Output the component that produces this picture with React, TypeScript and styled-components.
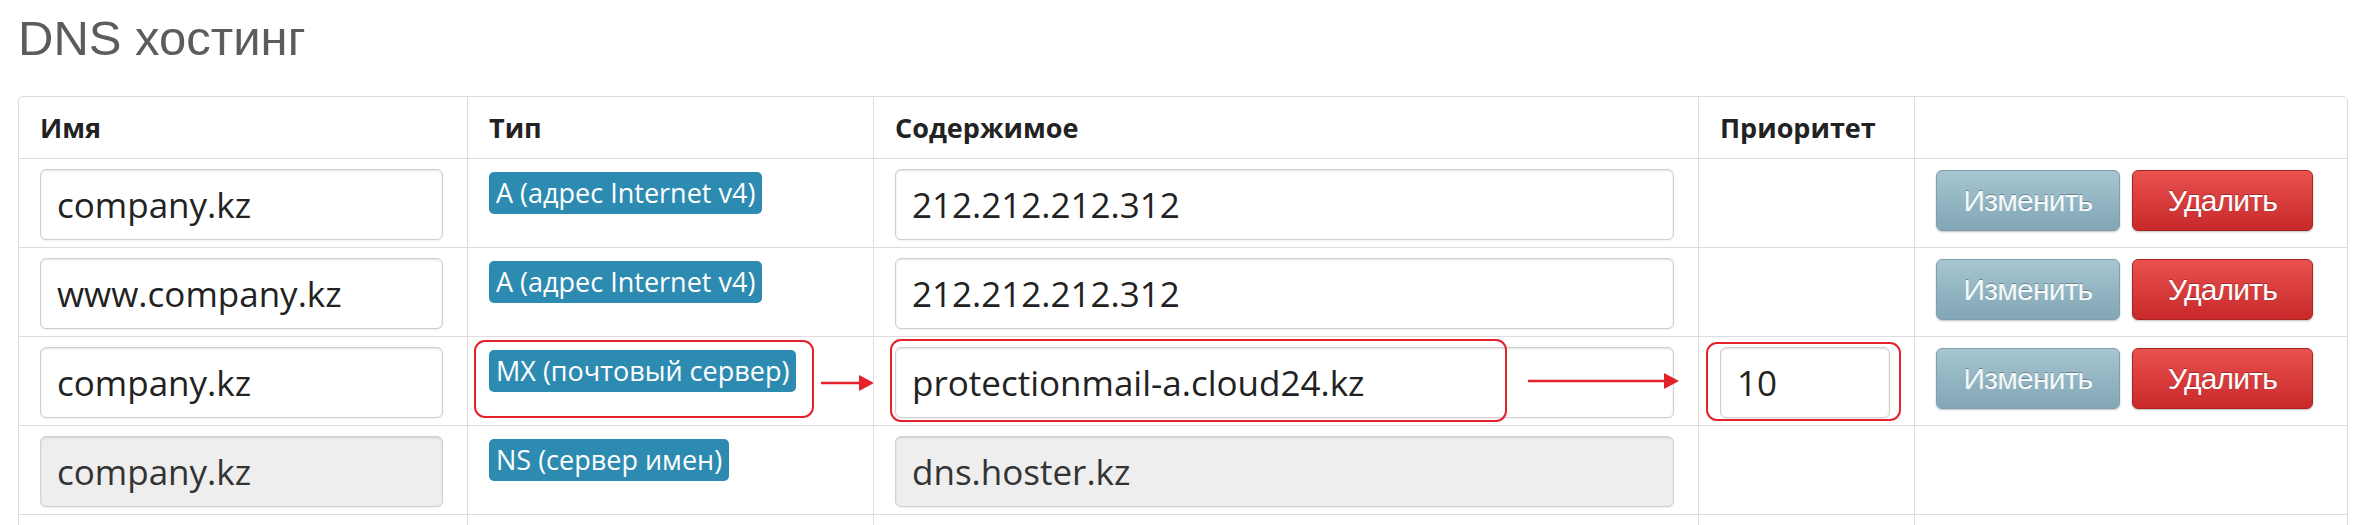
import React from 'react';
import styled, { createGlobalStyle } from 'styled-components';

const GlobalStyle = createGlobalStyle`
  html, body {
    margin: 0;
    padding: 0;
    background: #fff;
    overflow: hidden;
  }
  body {
    font-family: "Open Sans", "Liberation Sans", sans-serif;
    color: #333;
  }
`;

const Page = styled.div`
  padding: 14px 0 0 18px;
`;

const Title = styled.h1`
  margin: 0 0 34px;
  font-family: "Liberation Sans", Arial, sans-serif;
  font-weight: normal;
  font-size: 49px;
  line-height: 48px;
  color: #5c5c5c;
`;

const Table = styled.table`
  width: 2330px;
  table-layout: fixed;
  border-collapse: separate;
  border-spacing: 0;
  border: 1px solid #ddd;
  border-radius: 5px;
`;

const Col = styled.col<{ $w: number }>`
  width: ${p => p.$w}px;
`;

const Th = styled.th`
  height: 61px;
  padding: 0 21px;
  text-align: left;
  vertical-align: middle;
  font-size: 27px;
  font-weight: 700;
  color: #222;
  & + & {
    border-left: 1px solid #ddd;
  }
`;

const Td = styled.td`
  position: relative;
  padding: 10px 24px 7px 21px;
  vertical-align: top;
  border-top: 1px solid #ddd;
  & + & {
    border-left: 1px solid #ddd;
  }
`;

const Input = styled.input`
  box-sizing: border-box;
  display: block;
  width: 100%;
  height: 71px;
  padding: 0 16px;
  font-family: "Open Sans", sans-serif;
  font-size: 35px;
  color: #222;
  background: #fff;
  border: 1px solid #cfcfcf;
  border-radius: 6px;
  box-shadow: inset 0 1px 2px rgba(0, 0, 0, 0.12), 0 1px 1px rgba(0, 0, 0, 0.06);
  outline: none;

  &:disabled {
    background: #eee;
    color: #333;
    border-color: #d2d2d2;
  }
`;

const Label = styled.span`
  display: inline-block;
  margin-top: 3px;
  height: 42px;
  line-height: 42px;
  padding: 0 7px;
  font-size: 27px;
  color: #fff;
  background: #2d8bb1;
  border-radius: 5px;
  white-space: nowrap;
`;

const Actions = styled.div`
  display: flex;
  gap: 12px;
  margin-top: 1px;
`;

const Button = styled.button<{ $kind: 'edit' | 'delete' }>`
  height: 61px;
  padding: 0;
  font-family: "Liberation Sans", Arial, sans-serif;
  font-size: 30px;
  letter-spacing: -0.8px;
  color: #fff;
  text-shadow: 0 -1px 0 rgba(0, 0, 0, 0.3);
  border-radius: 6px;
  cursor: pointer;
  box-shadow: 0 1px 2px rgba(0, 0, 0, 0.25);
  ${p =>
    p.$kind === 'edit'
      ? `
    width: 184px;
    background: linear-gradient(#a6c5d1, #82a6b5);
    border: 1px solid #7f9fad;
    color: #f4fafc;
  `
      : `
    width: 181px;
    background: linear-gradient(#e9514f, #c8292a);
    border: 1px solid #a92222;
  `}
`;

const Mark = styled.div<{ $l: number; $t: number; $w: number; $h: number }>`
  position: absolute;
  left: ${p => p.$l}px;
  top: ${p => p.$t}px;
  width: ${p => p.$w}px;
  height: ${p => p.$h}px;
  box-sizing: border-box;
  border: 2px solid #e3222c;
  border-radius: 11px;
  pointer-events: none;
`;

const ArrowBox = styled.svg<{ $l: number; $t: number }>`
  position: absolute;
  left: ${p => p.$l}px;
  top: ${p => p.$t}px;
`;

const Arrow: React.FC<{ left: number; top: number; length: number }> = ({ left, top, length }) => (
  <ArrowBox $l={left} $t={top} width={length} height={18} viewBox={`0 0 ${length} 18`}>
    <line x1="0" y1="9" x2={length - 12} y2="9" stroke="#e3222c" strokeWidth="2.5" />
    <polygon points={`${length - 15},1 ${length},9 ${length - 15},17`} fill="#e3222c" />
  </ArrowBox>
);

type Rec = {
  name: string;
  type: string;
  content: string;
  priority?: string;
  locked?: boolean;
  marked?: boolean;
};

const records: Rec[] = [
  { name: 'company.kz', type: 'A (адрес Internet v4)', content: '212.212.212.312' },
  { name: 'www.company.kz', type: 'A (адрес Internet v4)', content: '212.212.212.312' },
  { name: 'company.kz', type: 'MX (почтовый сервер)', content: 'protectionmail-a.cloud24.kz', priority: '10', marked: true },
  { name: 'company.kz', type: 'NS (сервер имен)', content: 'dns.hoster.kz', locked: true },
  { name: 'company.kz', type: 'NS (сервер имен)', content: 'dns2.hoster.kz', locked: true },
];

const App: React.FC = () => {
  return (
    <>
      <GlobalStyle />
      <Page>
        <Title>DNS хостинг</Title>
        <Table>
          <colgroup>
            <Col $w={448} />
            <Col $w={406} />
            <Col $w={825} />
            <Col $w={216} />
            <Col $w={433} />
          </colgroup>
          <thead>
            <tr>
              <Th>Имя</Th>
              <Th>Тип</Th>
              <Th>Содержимое</Th>
              <Th>Приоритет</Th>
              <Th />
            </tr>
          </thead>
          <tbody>
            {records.map((r, i) => (
              <tr key={i}>
                <Td>
                  <Input defaultValue={r.name} disabled={r.locked} />
                </Td>
                <Td>
                  <Label>{r.type}</Label>
                  {r.marked && (
                    <>
                      <Mark $l={6} $t={3} $w={340} $h={78} />
                      <Arrow left={353} top={37} length={53} />
                    </>
                  )}
                </Td>
                <Td>
                  <Input defaultValue={r.content} disabled={r.locked} />
                  {r.marked && (
                    <>
                      <Mark $l={16} $t={2} $w={617} $h={83} />
                      <Arrow left={654} top={35} length={151} />
                    </>
                  )}
                </Td>
                <Td>
                  {r.priority && <Input defaultValue={r.priority} />}
                  {r.marked && <Mark $l={7} $t={5} $w={195} $h={79} />}
                </Td>
                <Td>
                  {!r.locked && (
                    <Actions>
                      <Button $kind="edit">Изменить</Button>
                      <Button $kind="delete">Удалить</Button>
                    </Actions>
                  )}
                </Td>
              </tr>
            ))}
          </tbody>
        </Table>
      </Page>
    </>
  );
};

export default App;
